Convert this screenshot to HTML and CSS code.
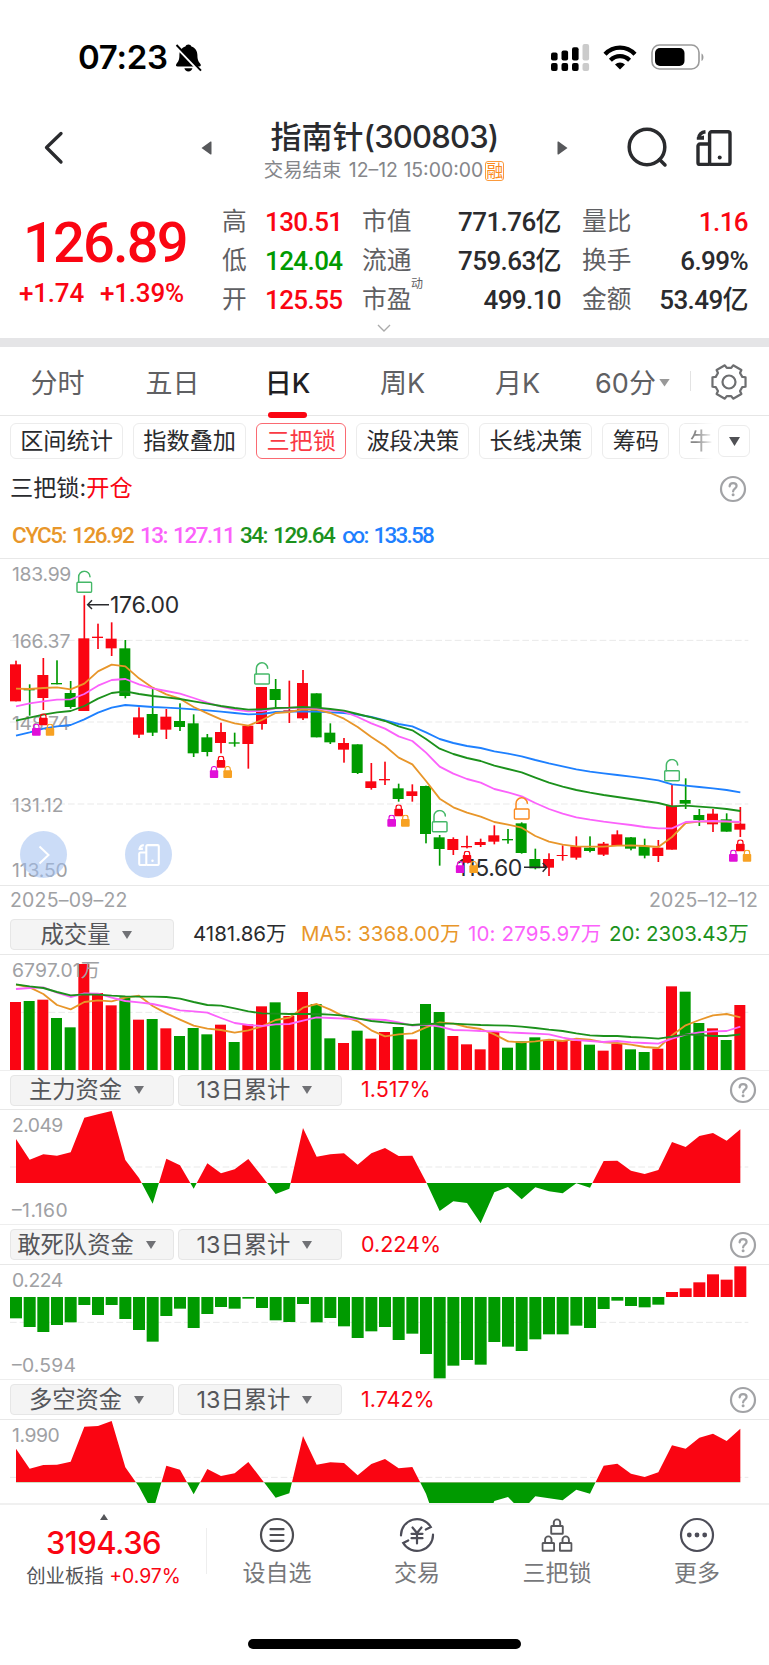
FILE: index.html
```html
<!DOCTYPE html>
<html lang="zh-Hans">
<head>
  <meta charset="UTF-8">
  <title>指南针(300803)</title>
  <link rel="stylesheet" href="styles.css">
</head>
<body>
  <svg class="defs" width="0" height="0">
    <symbol id="ic-split" viewBox="0 0 36 36">
      <g fill="none" stroke="currentColor" stroke-width="3.4" stroke-linejoin="round">
        <rect x="13.6" y="1.8" width="20.4" height="32.6" rx="2"/>
        <path d="M13.6 14H4a2 2 0 0 0-2 2v16.4a2 2 0 0 0 2 2h9.6"/>
        <path d="M9.5 1.8C5.2 2.2 3 4.6 2.6 8.6"/>
      </g>
      <path d="M.8 7.2l7.2-1.6v4.2H.8z" fill="currentColor"/>
      <circle cx="23.7" cy="27.5" r="2" fill="currentColor"/>
    </symbol>
    <symbol id="ic-help" viewBox="0 0 28 28">
      <g fill="none" stroke="currentColor" stroke-width="2.2" stroke-linecap="round">
        <circle cx="14" cy="14" r="12"/>
        <path d="M10.6 11.4c.1-2.2 1.5-3.3 3.5-3.3s3.5 1.2 3.5 3c0 2.5-3.5 2.7-3.5 5.3"/>
      </g>
      <circle cx="14.1" cy="19.8" r="1.5" fill="currentColor"/>
    </symbol>
    <symbol id="ic-unlock" viewBox="0 0 50 70">
      <g fill="none" stroke="currentColor" stroke-width="4.5" stroke-linejoin="round" stroke-linecap="round">
        <rect x="3" y="36" width="44" height="30" rx="3"/>
        <path d="M8 36V20a17 17 0 0 1 34-1"/>
      </g>
    </symbol>
    <symbol id="ic-lock" viewBox="0 0 28 38">
      <path d="M6 16V9.5a8 8 0 0 1 16 0V16" fill="none" stroke="currentColor" stroke-width="3.5"/>
      <rect x="1" y="13" width="26" height="23" rx="3" fill="currentColor"/>
    </symbol>
    <symbol id="ic-triple" viewBox="0 0 70 70">
      <use href="#ic-lock" x="21" y="0" width="28" height="38" color="#fa0512"/>
      <use href="#ic-lock" x="0" y="31" width="28" height="38" color="#e010d8"/>
      <use href="#ic-lock" x="41" y="31" width="28" height="38" color="#f7a122"/>
    </symbol>
    <symbol id="ic-padlock" viewBox="0 0 14 17">
      <g fill="none" stroke="currentColor" stroke-width="1.9" stroke-linejoin="round">
        <rect x="1.2" y="8" width="11.6" height="7.8" rx=".6"/>
        <path d="M3.8 8V4.6a3.2 3.2 0 0 1 6.4 0V8"/>
      </g>
    </symbol>
  </svg>

  <div class="status-bar">
    <span class="clock">07:23</span>
    <svg class="bell" width="27" height="28" viewBox="0 0 27 28">
      <path d="M13.4.5c1.5 0 2.7.8 3 2.1 3.9 1.1 6 4.5 6 8.7 0 4.9 1.2 6.4 3 8.7.8 1 .4 2.5-1.2 2.5H2.7c-1.7 0-2.2-1.4-1.3-2.6 1.8-2.2 3-3.7 3-8.6 0-4.2 2.1-7.6 6-8.7.4-1.3 1.5-2.1 3-2.1z"/>
      <path d="M9.4 24.2h8c-.4 2-1.9 3.2-4 3.2s-3.6-1.2-4-3.2z"/>
      <path d="M-1 .2L25.5 28" stroke="#fff" stroke-width="3"/>
      <path d="M1.5 1L26 26.6" stroke="#000" stroke-width="1.9"/>
    </svg>
    <svg class="signal" width="39" height="28" viewBox="0 0 39 28">
      <g>
        <rect x="0" y="8.5" width="6.6" height="8" rx="2"/><rect x="0" y="19" width="6.6" height="8" rx="2"/>
        <rect x="10.5" y="6.5" width="6.6" height="10" rx="2"/><rect x="10.5" y="19" width="6.6" height="8" rx="2"/>
        <rect x="21" y="3.2" width="6.6" height="13.3" rx="2"/><rect x="21" y="19" width="6.6" height="8" rx="2"/>
      </g>
      <g fill="#cbcbcb"><rect x="31.5" y="0" width="6.6" height="16.5" rx="2"/><rect x="31.5" y="19" width="6.6" height="8" rx="2"/></g>
    </svg>
    <svg class="wifi" width="34" height="25" viewBox="0 0 34 25">
      <g fill="none" stroke="#000" stroke-width="4.3">
        <path d="M2 9.2C10.5.5 23.5.5 32 9.2"/>
        <path d="M7.4 15.2c5.6-5.4 13.6-5.4 19.2 0"/>
      </g>
      <path d="M17 24.5l-5-5c2.9-2.7 7.1-2.7 10 0z"/>
    </svg>
    <svg class="battery" width="54" height="27" viewBox="0 0 54 27">
      <rect x="1" y="1" width="47" height="24" rx="7.5" fill="none" stroke="#9a9a9a" stroke-width="1.6"/>
      <rect x="4" y="4" width="29.5" height="18" rx="5"/>
      <path d="M50.5 9.5c2.6 1.1 2.6 6.4 0 7.5z" fill="#9a9a9a"/>
    </svg>
  </div>

  <div class="title-bar">
    <svg class="back" width="20" height="34" viewBox="0 0 20 34"><path d="M17 2.5L2.5 16.5 17 31" fill="none" stroke="#2a2b2e" stroke-width="3.3" stroke-linecap="round" stroke-linejoin="round"/></svg>
    <svg class="prev" width="11" height="14" viewBox="0 0 11 14"><path d="M10.5 1v12a.6.6 0 0 1-1 .4L.5 7l9-6.4a.6.6 0 0 1 1 .4z" fill="#57585b"/></svg>
    <div class="stock">
      <div class="stock-name">指南针<span class="code">(300803)</span></div>
      <div class="stock-state">交易结束 <span class="time">12–12 15:00:00</span><i class="margin-tag">融</i></div>
    </div>
    <svg class="next" width="11" height="14" viewBox="0 0 11 14"><path d="M.5 1v12a.6.6 0 0 0 1 .4l9-6.4-9-6.4a.6.6 0 0 0-1 .4z" fill="#57585b"/></svg>
    <svg class="search" width="41" height="41" viewBox="0 0 41 41"><g fill="none" stroke="#2a2b2e" stroke-width="3.5" stroke-linecap="round"><circle cx="20" cy="20" r="17.8"/><path d="M32.5 32.5l5.5 5.5"/></g></svg>
    <svg class="split" width="36" height="36"><use href="#ic-split"/></svg>
  </div>

  <div class="quote">
    <div class="last">
      <div class="price">126.89</div>
      <div class="change"><span>+1.74</span><span>+1.39%</span></div>
    </div>
    <div class="stats">
      <span>高</span><b class="red l">130.51</b><span>市值</span><b>771.76亿</b><span class="k3">量比</span><b class="red">1.16</b>
      <span>低</span><b class="green l">124.04</b><span>流通</span><b>759.63亿</b><span class="k3">换手</span><b>6.99%</b>
      <span>开</span><b class="red l">125.55</b><span>市盈<sup>动</sup></span><b>499.10</b><span class="k3">金额</span><b>53.49亿</b>
    </div>
    <svg class="expand" width="14" height="8" viewBox="0 0 14 8"><path d="M1 1l6 6 6-6" fill="none" stroke="#aaa" stroke-width="1.4"/></svg>
  </div>

  <div class="tabs">
    <span>分时</span>
    <span>五日</span>
    <span class="active">日K</span>
    <span>周K</span>
    <span>月K</span>
    <span class="more">60分<svg width="11" height="8" viewBox="0 0 11 8"><path d="M.3 0h10.4L5.5 7.5z" fill="#999"/></svg></span>
    <i class="tab-line"></i>
    <svg class="gear" width="36" height="36" viewBox="0 0 36 36"></svg>
  </div>

  <div class="chips">
    <span>区间统计</span><span>指数叠加</span><span class="on">三把锁</span><span>波段决策</span><span>长线决策</span><span>筹码</span><span class="cut">牛</span>
    <span class="drop"><svg width="11" height="9" viewBox="0 0 11 9"><path d="M0 0h11L5.5 9z" fill="#505155"/></svg></span>
  </div>

  <div class="signal-row">
    <span>三把锁:<em>开仓</em></span>
    <svg class="help" width="28" height="28"><use href="#ic-help"/></svg>
  </div>
  <div class="cyc">
    <span class="orange c1">CYC5: 126.92</span><span class="pink c2">13: 127.11</span><span class="dgreen c3">34: 129.64</span><span class="blue c4">∞: 133.58</span>
  </div>

  <div class="k-chart">
    <svg id="kline" width="769" height="326" viewBox="0 12 2307 978"></svg>
    <div class="float float-next"><svg width="12" height="20" viewBox="0 0 12 20"><path d="M1.5 1.5L10.5 10l-9 8.5" fill="none" stroke="#fff" stroke-width="2"/></svg></div>
    <div class="float float-split"><svg width="22" height="22"><use href="#ic-split"/></svg></div>
  </div>
  <div class="dates"><span>2025–09–22</span><span>2025–12–12</span></div>

  <div class="pane-head vol-head">
    <span class="select">成交量<i></i></span>
    <span class="vol v0">4181.86万</span><span class="vol v1 orange">MA5: 3368.00万</span><span class="vol v2 pink">10: 2795.97万</span><span class="vol v3 dgreen">20: 2303.43万</span>
  </div>
  <div class="pane"><svg id="volume" width="769" height="115" viewBox="0 165 2307 345"></svg></div>

  <div class="pane-head first-head">
    <span class="select">主力资金<i></i></span><span class="select">13日累计<i></i></span><span class="pct">1.517%</span>
    <svg class="help" width="28" height="28"><use href="#ic-help"/></svg>
  </div>
  <div class="pane"><svg id="fund1" width="769" height="114" viewBox="0 630 2307 342"></svg></div>

  <div class="pane-head">
    <span class="select">敢死队资金<i></i></span><span class="select">13日累计<i></i></span><span class="pct">0.224%</span>
    <svg class="help" width="28" height="28"><use href="#ic-help"/></svg>
  </div>
  <div class="pane"><svg id="fund2" width="769" height="114" viewBox="0 120 2307 342"></svg></div>

  <div class="pane-head">
    <span class="select">多空资金<i></i></span><span class="select">13日累计<i></i></span><span class="pct">1.742%</span>
    <svg class="help" width="28" height="28"><use href="#ic-help"/></svg>
  </div>
  <div class="pane"><svg id="fund3" width="769" height="83" viewBox="0 585 2307 249"></svg></div>

  <div class="bottom-bar">
    <div class="index">
      <i class="up"></i>
      <div class="index-value">3194.36</div>
      <div class="index-name">创业板指 <em>+0.97%</em></div>
    </div>
    <div class="action">
      <svg width="36" height="36" viewBox="0 0 36 36"><g fill="none" stroke="#4d4d52" stroke-width="2.2" stroke-linecap="round"><circle cx="18" cy="18" r="16"/><path d="M11.5 12.2h13M11.5 18h13M11.5 23.8h13"/></g></svg>
      <span>设自选</span>
    </div>
    <div class="action">
      <svg width="36" height="36" viewBox="0 0 36 36"><g fill="none" stroke="#4d4d58" stroke-width="2.2" stroke-linecap="round"><path d="M2 18.5A16 16 0 0 1 31.8 10l-5 2.5M34 17.5A16 16 0 0 1 4.2 26l5-2.5"/><path d="M13.5 10.5l4.5 5.5 4.5-5.5M12.5 16.8h11M12.5 21.2h11M18 16v10.5"/></g></svg>
      <span>交易</span>
    </div>
    <div class="action">
      <svg width="36" height="36" viewBox="0 0 36 36" color="#58585c"><use href="#ic-padlock" x="11" y="1" width="14" height="17"/><use href="#ic-padlock" x="2.3" y="18" width="14" height="17"/><use href="#ic-padlock" x="19.7" y="18" width="14" height="17"/></svg>
      <span>三把锁</span>
    </div>
    <div class="action">
      <svg width="36" height="36" viewBox="0 0 36 36"><circle cx="18" cy="18" r="16" fill="none" stroke="#4d4d58" stroke-width="2.2"/><g fill="#4d4d58"><circle cx="10.3" cy="18" r="2.4"/><circle cx="18" cy="18" r="2.4"/><circle cx="25.7" cy="18" r="2.4"/></g></svg>
      <span>更多</span>
    </div>
  </div>
  <div class="home-indicator"></div>

  <script src="charts.js"></script>
</body>
</html>
```
FILE: styles.css
```css
* { box-sizing: border-box; }
body { margin: 0; width: 769px; height: 1665px; overflow: hidden; background: #fff; color: #2a2b2e; font-family: Inter, "Noto Sans CJK SC", sans-serif; font-size: 23px; line-height: 1; }
svg { display: block; flex: none; }
em, i { font-style: normal; }
.defs { position: absolute; }
.red, em { color: #fa0512; }
.green { color: #009a00; }
.orange { color: #e8962a; }
.pink { color: #fb62fb; }
.dgreen { color: #1c911c; }
.blue { color: #1e80ff; }

.status-bar { display: flex; align-items: center; height: 115px; padding-left: 78px; }
.clock { width: 97px; font-size: 33px; font-weight: 600; letter-spacing: -0.3px; white-space: nowrap; color: #000; }
.signal { margin-left: 349px; }
.wifi { margin-left: 13px; }
.battery { margin-left: 14px; }

.title-bar { display: flex; align-items: center; height: 65px; margin-bottom: 3px; padding-left: 44px; }
.prev { margin-left: 137px; }
.stock { align-self: flex-start; width: 345px; padding-top: 3px; text-align: center; }
.stock-name { height: 38px; line-height: 38px; font-size: 31px; font-weight: 500; white-space: nowrap; }
.code { letter-spacing: -0.8px; }
.stock-state { display: flex; justify-content: center; align-items: center; height: 30px; font-size: 19.4px; color: #85868a; white-space: pre; }
.time { margin-left: 2px; letter-spacing: 0; }
.margin-tag { width: 19px; height: 20px; margin: 0 1px 0 2px; border: 1px solid #fb9a3c; border-radius: 3px; font-size: 17px; line-height: 18px; color: #fb8a20; }
.search { margin-left: 59px; }
.split { margin-left: 28px; }

.quote { position: relative; display: flex; height: 155px; }
.last { width: 222px; padding-left: 19px; color: #fa0512; font-family: Roboto, sans-serif; font-weight: 500; }
.price { margin: 28px 0 0 4px; height: 64px; line-height: 64px; font-size: 56px; letter-spacing: -1.8px; }
.change { display: flex; gap: 16px; height: 36px; line-height: 36px; font-size: 26px; letter-spacing: -0.2px; }
.stats { display: grid; grid-template-columns: 43px 97px 70px 129px 91px 96px; grid-template-rows: repeat(3, 39px); margin-top: 19px; align-items: center; }
.stats span { position: relative; font-size: 24.7px; color: #5f6063; white-space: nowrap; }
.stats .k3 { padding-left: 21px; }
.stats sup { position: absolute; left: 49px; top: -9px; font-size: 12px; line-height: 12px; }
.stats b { font-family: Roboto, "Noto Sans CJK SC", sans-serif; font-weight: 500; font-size: 26px; letter-spacing: -0.6px; text-align: right; white-space: nowrap; }
.stats .l { text-align: left; }
.expand { position: absolute; left: 377px; bottom: 6px; }

.tabs { display: flex; align-items: center; height: 78px; border-top: 9px solid #e5e5e7; border-bottom: 1px solid #e6e6e6; font-size: 27px; color: #5f6063; }
.tabs span { position: relative; width: 115px; text-align: center; height: 68px; line-height: 74px; white-space: nowrap; }
.tabs .active { color: #1f2023; font-weight: 500; }
.tabs .active::after { content: ""; position: absolute; left: 38px; bottom: -3px; width: 39px; height: 6px; border-radius: 3px; background: #fa0512; }
.tabs .more { display: flex; align-items: center; justify-content: center; gap: 3px; padding-top: 5px; line-height: 68px; }
.more svg { margin-bottom: 2px; }
.tab-line { width: 1px; height: 20px; background: #e3e3e3; }
.gear { margin: 2px 0 0 20px; }

.chips { display: flex; gap: 10px; padding: 7px 0 0 10px; height: 44px; }
.chips span { height: 36px; padding: 0 9.2px; border: 1px solid #ececec; border-radius: 6px; font-size: 23.2px; line-height: 35px; white-space: nowrap; }
.chips .on { color: #fa3a44; border-color: #fa6a72; }
.chips .cut { width: 34px; padding-right: 0; border-right: 0; border-radius: 6px 0 0 6px; color: #888; -webkit-mask-image: linear-gradient(90deg, #000 50%, transparent); }
.chips .drop { display: flex; align-items: center; justify-content: center; width: 32px; height: 32px; margin: 2px 0 0 -5px; padding: 0; }

.signal-row { display: flex; justify-content: space-between; align-items: center; height: 58px; padding: 0 22px 0 10px; font-size: 23.2px; }
.help { color: #a2a3a6; }
.cyc { display: flex; align-items: center; height: 40px; padding: 0 0 5px 12px; font-family: Roboto, "Noto Sans CJK SC", sans-serif; font-weight: 500; font-size: 22.5px; letter-spacing: -1.5px; word-spacing: 2px; white-space: nowrap; }
.c1 { width: 128px; }
.c2 { width: 100px; }
.c3 { width: 102px; }
.c4 { letter-spacing: -1.8px; }

.k-chart { position: relative; border-top: 1px solid #e8e8e8; border-bottom: 1px solid #e8e8e8; height: 328px; }
.float { position: absolute; top: 272px; display: flex; align-items: center; justify-content: center; width: 47px; height: 47px; border-radius: 50%; background: rgba(160, 192, 240, 0.55); color: #fff; }
.float-next { left: 20px; }
.float-split { left: 125px; }
.dates { display: flex; justify-content: space-between; align-items: center; height: 29px; padding: 0 11px 0 10px; font-size: 19.5px; letter-spacing: 0.2px; color: #a0a1a4; }

.pane-head { display: flex; align-items: center; gap: 4px; height: 40px; padding: 0 12px 0 10px; border-top: 1px solid #eee; }
.first-head { height: 39px; }
.vol-head { height: 39px; border-top: 0; }
.select { display: flex; align-items: center; justify-content: center; gap: 12px; width: 164px; height: 31px; padding-right: 11px; border: 1px solid #e6e6e6; border-radius: 4px; background: #f4f4f4; color: #55565a; font-size: 23.3px; white-space: nowrap; }
.select i { border: 5.5px solid transparent; border-top: 8px solid #707175; border-bottom: 0; }
.vol { font-size: 20.5px; white-space: nowrap; }
.v0 { margin-left: 15px; width: 104px; }
.v1 { width: 163px; letter-spacing: 0.05px; }
.v2 { width: 137px; letter-spacing: 0.15px; }
.pct { margin-left: 15px; font-size: 21.5px; color: #fa0512; }
.pane-head .help { margin-left: auto; }
.pane { border-top: 1px solid #e8e8e8; }

.bottom-bar { display: flex; height: 98px; border-top: 2px solid #f0f0f0; }
.index { position: relative; display: flex; flex-direction: column; align-items: center; width: 207px; padding-top: 9px; }
.index::after { content: ""; position: absolute; right: 0; top: 23px; width: 1px; height: 46px; background: #eee; }
.up { border: 4px solid transparent; border-bottom: 6px solid #55565a; border-top: 0; }
.index-value { margin-top: 8px; height: 30px; line-height: 30px; font-size: 31px; font-weight: 500; letter-spacing: -0.5px; color: #fa0512; }
.index-name { margin-top: 6px; font-size: 19.4px; line-height: 24px; color: #55565a; white-space: nowrap; }
.action { display: flex; flex-direction: column; align-items: center; width: 140px; padding-top: 12px; }
.action span { margin-top: 5px; font-size: 23px; line-height: 30px; color: #77787b; }
.home-indicator { width: 273px; height: 10px; margin: 38px auto 0; border-radius: 5px; background: #000; }
```
FILE: charts.js
```js
const RED = "#fa0512", GREEN = "#009a00";
const ORANGE = "#e8962a", PINK = "#fb62fb", DGREEN = "#1c911c", BLUE = "#1e80ff";
const STEP = 41, LEFT = 30;
const mid = i => 48 + STEP * i;

// [up/down, high, low, body top, body bottom] in chart units
const candles = [
  ["r",317,439,328,439],["g",388,482,402,406],["r",309,465,360,429],["g",316,388,384,388],["g",378,461,414,456],
  ["r",121,468,250,468],["r",206,282,245,249],["r",202,303,251,280],["g",255,430,280,423],["r",457,549,487,539],
  ["g",397,543,477,533],["r",462,552,485,524],["g",445,528,498,516],["g",478,606,505,595],["g",537,604,547,591],
  ["r",503,595,531,564],["g",533,575,562,566],["r",510,641,512,567],["r",396,524,396,507],["g",372,457,402,435],
  ["r",377,504,466,470],["r",345,495,384,490],["g",415,547,415,547],["g",505,567,533,562],["r",549,623,564,584],
  ["g",568,657,568,654],["r",624,704,679,699],["r",620,690,672,676],["g",686,740,700,732],["r",688,740,709,723],
  ["g",692,865,693,837],["g",840,932,847,882],["r",847,900,852,885],["r",842,880,873,877],["r",851,876,861,870],
  ["r",811,868,841,860],["g",822,866,852,856],["g",802,896,805,894],["g",881,943,912,940],["r",895,963,912,938],
  ["r",871,917,900,903],["r",844,914,874,908],["g",844,892,878,888],["r",861,903,866,899],["r",826,873,838,873],
  ["g",846,886,847,881],["g",851,910,874,902],["r",855,921,878,903],["r",690,884,752,884],["g",670,762,735,746],
  ["g",762,813,780,795],["r",762,831,776,808],["g",775,830,793,830],["r",756,846,806,824]
];

const cyc = {
  [BLUE]: [542,532,521,514,510,493,473,458,450,453,456,458,460,463,466,470,474,478,477,471,470,469,470,472,474,479,486,496,507,514,532,552,564,573,579,589,596,604,615,625,634,643,650,655,660,665,670,676,688,692,696,700,705,712],
  [ORANGE]: [401,402,399,397,403,386,349,329,334,370,398,418,431,456,475,493,505,512,495,474,471,463,464,474,491,516,546,573,608,628,678,731,757,773,785,801,809,818,843,860,869,874,875,875,872,871,873,876,846,804,800,799,800,802],
  [PINK]: [454,445,439,434,433,417,392,375,372,388,400,408,416,429,443,455,464,469,468,460,459,458,461,465,470,486,505,521,544,558,593,635,656,672,683,702,712,724,744,762,776,787,794,800,805,810,816,820,820,801,799,798,799,801],
  [DGREEN]: [497,488,479,472,468,453,431,414,409,417,423,427,432,439,446,453,459,464,463,459,458,456,458,462,467,477,487,498,514,526,552,581,597,609,618,632,642,652,668,683,695,705,713,720,726,732,738,744,754,752,755,758,762,768]
};

const volumes = [306,303,299,354,382,192,279,316,292,359,357,385,408,384,403,374,426,373,319,307,348,276,312,415,429,392,416,396,381,418,312,336,408,433,448,396,443,424,412,421,423,422,434,452,431,448,456,446,259,275,369,385,420,315];
const volMa = {
  [ORANGE]: [254,262,282,315,328,306,301,304,293,287,318,340,359,377,386,390,398,391,379,360,353,323,312,329,350,364,391,409,403,400,382,367,371,381,387,403,424,427,424,419,423,416,419,427,429,434,441,444,406,376,360,346,342,352],
  [PINK]: [267,264,262,278,291,280,281,293,303,307,312,321,331,334,338,354,369,375,378,373,372,362,352,354,356,357,358,360,367,377,374,380,390,391,393,394,397,399,401,403,413,420,423,426,423,427,429,431,416,404,397,394,393,380],
  [DGREEN]: [253,259,264,276,286,283,284,287,289,290,290,291,296,306,315,317,325,334,340,341,342,342,342,344,347,355,363,367,371,375,372,371,371,373,375,376,377,380,384,389,393,400,406,408,408,411,413,416,410,403,405,408,408,403]
};

const mainFund = [717,779,763,767,757,653,643,633,780,834,911,776,796,866,790,820,808,777,829,882,866,684,770,763,760,794,760,744,768,767,845,933,904,909,970,877,861,898,862,874,880,850,863,783,782,812,822,810,726,741,708,699,722,688];
const squadFund = [280,306,321,300,292,240,270,240,282,315,350,273,251,309,267,246,251,221,249,286,291,237,292,279,304,339,319,306,345,326,387,460,422,405,419,351,365,378,343,328,328,302,309,252,227,243,247,239,201,190,172,148,164,124];
const longFund = [671,731,720,719,710,605,603,588,727,785,862,722,734,808,732,753,745,711,764,818,805,633,719,712,714,751,717,702,730,726,806,924,870,880,930,828,816,858,814,820,826,794,806,722,716,746,756,742,661,671,638,626,648,611];

const rect = (x, y, w, h, c) => `<rect x="${x}" y="${y}" width="${w}" height="${h}" fill="${c}"/>`;
const grid = y => `<path d="M30 ${y}H2245" stroke="#e9e9e9" stroke-width="3" stroke-dasharray="20 9"/>`;
const lines = set => Object.entries(set).map(([c, ys]) =>
  `<polyline points="${ys.map((y, i) => mid(i) + "," + y).join(" ")}" fill="none" stroke="${c}" stroke-width="5.5" stroke-linejoin="round"/>`).join("");
const label = (t, y, w, x = 36, size = 58, fill = "#a0a1a4") =>
  `<text x="${x}" y="${y}" font-size="${size}" fill="${fill}" textLength="${w}">${t}</text>`;

function drawKline() {
  let s = grid(256) + grid(501) + grid(747);
  s += label("183.99", 78, 178) + label("166.37", 279, 175) + label("148.74", 524, 174) + label("131.12", 771, 155) + label("113.50", 967, 167);
  s += label("176.00", 173, 208, 330, 69, "#2a2b2e") + label("115.60", 962, 195, 1372, 69, "#2a2b2e");
  candles.forEach(([d, hi, lo, top, bot], i) => {
    const c = d === "r" ? RED : GREEN;
    s += rect(mid(i) - 2.5, hi, 5, lo - hi, c) + rect(LEFT + STEP * i, top, 33, bot - top, c);
  });
  s += lines(cyc);
  s += `<path d="M276 136L263 149l13 13M263 149H327M1628 924l12 13-12 13M1640 937H1572" fill="none" stroke="#2a2b2e" stroke-width="4.5"/>`;
  [[5, 46, "#45b868"], [18, 321, "#45b868"], [31, 764, "#45b868"], [37, 726, "#fb8a20"], [48, 611, "#45b868"]].forEach(([i, y, c]) => {
    s += `<use href="#ic-unlock" x="${mid(i) - 25}" y="${y}" width="50" height="70" color="${c}"/>`;
  });
  [[2, 475], [15, 602], [28, 748], [33, 887], [53, 853]].forEach(([i, y]) => {
    s += `<use href="#ic-triple" x="${mid(i) - 35}" y="${y}" width="70" height="70"/>`;
  });
  document.getElementById("kline").innerHTML = s;
}

function drawVolume() {
  let s = grid(337);
  volumes.forEach((y, i) => {
    s += rect(LEFT + STEP * i, y, 33, 510 - y, candles[i][0] === "r" ? RED : GREEN);
  });
  s += lines(volMa) + label("6797.01万", 232, 264);
  document.getElementById("volume").innerHTML = s;
}

function drawArea(id, ys, base, gridY, labels) {
  const pts = `${mid(0)},${base} ` + ys.map((y, i) => mid(i) + "," + y).join(" ") + ` ${mid(53)},${base}`;
  document.getElementById(id).innerHTML = grid(gridY) +
    `<clipPath id="${id}-up"><rect y="0" width="2307" height="${base}"/></clipPath>` +
    `<clipPath id="${id}-down"><rect y="${base}" width="2307" height="400"/></clipPath>` +
    `<polygon points="${pts}" fill="${RED}" clip-path="url(#${id}-up)"/>` +
    `<polygon points="${pts}" fill="${GREEN}" clip-path="url(#${id}-down)"/>` + labels;
}

function drawSquad() {
  let s = grid(292);
  squadFund.forEach((y, i) => {
    s += y > 216 ? rect(LEFT + STEP * i, 216, 36, y - 216, GREEN) : rect(LEFT + STEP * i, y, 36, 216 - y, RED);
  });
  document.getElementById("fund2").innerHTML = s + label("0.224", 187, 154) + label("–0.594", 441, 192);
}

drawKline();
drawVolume();
drawArea("fund1", mainFund, 849, 801, label("2.049", 697, 154) + label("–1.160", 950, 167));
drawSquad();
drawArea("fund3", longFund, 772, 757, label("1.990", 652, 143));

// settings gear: six teeth round a hub
const gearPts = [];
for (let k = 0; k < 6; k++) {
  [[14, 17.2], [46, 17.2], [51, 14.2], [69, 14.2]].forEach(([deg, r]) => {
    const a = (k * 60 + deg) * Math.PI / 180;
    gearPts.push((18 + r * Math.sin(a)).toFixed(2) + "," + (18 - r * Math.cos(a)).toFixed(2));
  });
}
document.querySelector(".gear").innerHTML =
  `<g fill="none" stroke="#6d6e70" stroke-width="2.2" stroke-linejoin="round"><polygon points="${gearPts.join(" ")}"/><circle cx="18" cy="18" r="6.5"/></g>`;
```
